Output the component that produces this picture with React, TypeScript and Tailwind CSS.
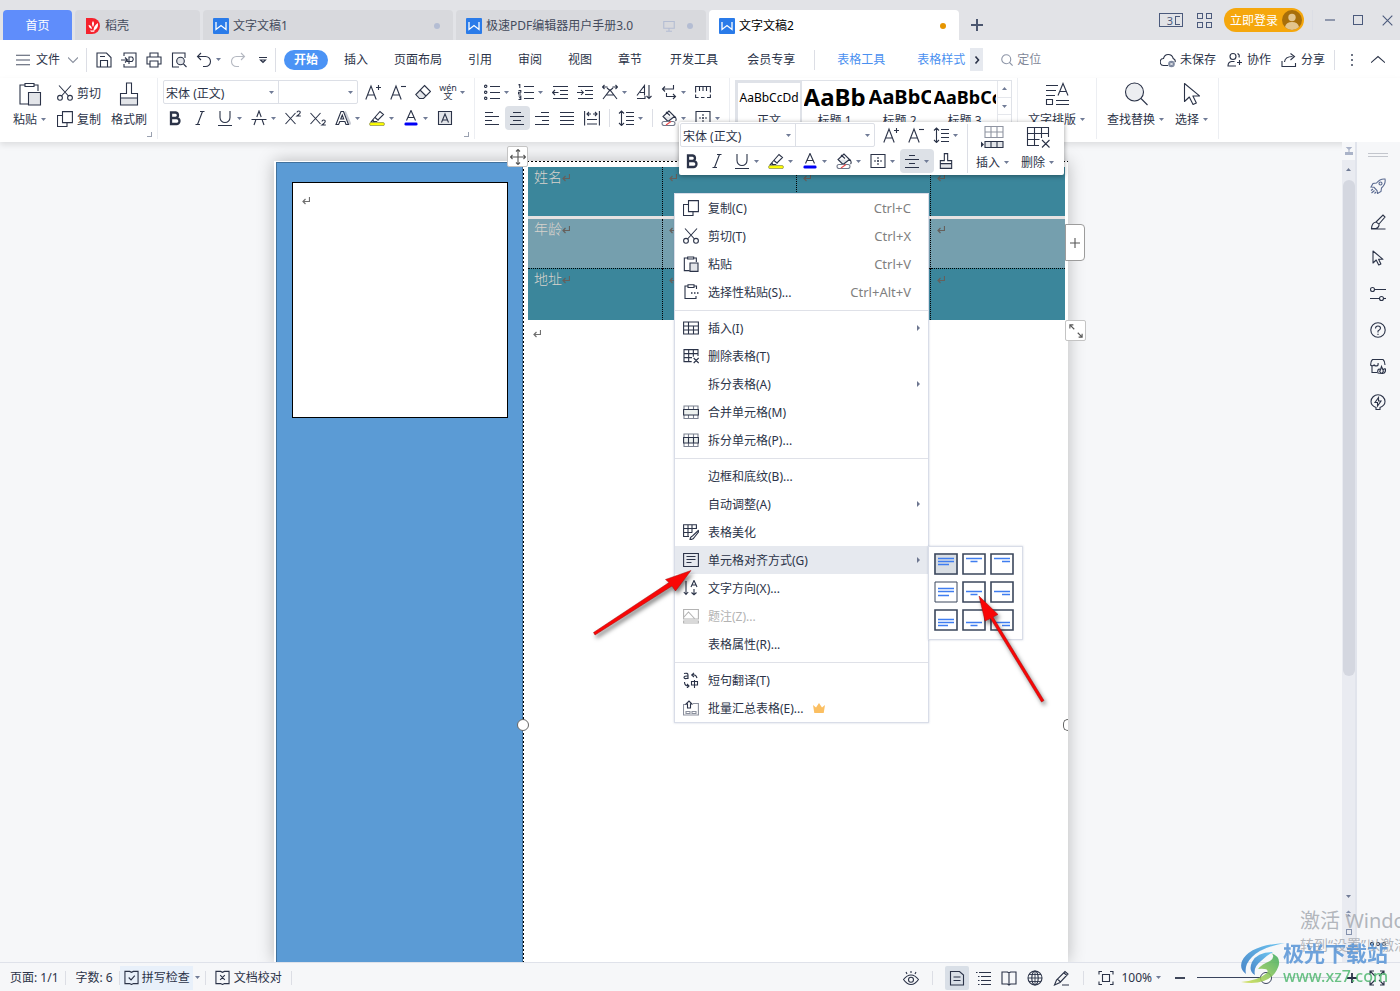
import type { ReactNode } from "react";

const DARK = "#2b3348";

function Icon({ children, className = "size-4", box = 16 }: { children: ReactNode; className?: string; box?: number }) {
  return (
    <svg
      viewBox={`0 0 ${box} ${box}`}
      fill="none"
      stroke="currentColor"
      strokeWidth="1.1"
      className={`shrink-0 [&_*]:[vector-effect:non-scaling-stroke] ${className}`}
      aria-hidden="true"
    >
      {children}
    </svg>
  );
}

function Caret() {
  return (
    <svg viewBox="0 0 5 3" className="h-[3px] w-[5px] shrink-0 fill-[#707b96]" aria-hidden="true">
      <path d="M0 0h5L2.500 3z" />
    </svg>
  );
}

function Rule({ className = "h-5" }: { className?: string }) {
  return <span className={`w-px shrink-0 bg-[#dcdee5] ${className}`} />;
}

// ---- icons -------------------------------------------------------------

const lines = {
  left: "M1 2.5h8M1 6.5h14M1 10.5h7M1 14.5h14",
  center: "M4 2.5h8M1 6.5h14M4 10.5h8M1 14.5h14",
  right: "M7 2.5h8M1 6.5h14M8 10.5h7M1 14.5h14",
  justify: "M1 2.5h14M1 6.5h14M1 10.5h14M1 14.5h14",
};

const AlignIcon = ({ d }: { d: string }) => <Icon><path d={d} /></Icon>;

const MiniCenter = () => <Icon><path d="M5 2.5h6M1 6.5h14M5 10.5h6M1 14.5h14" /></Icon>;

const CutIcon = () => (
  <Icon>
    <path d="M2 .5l9.500 10.500M14 .5L4.500 11" />
    <circle cx="3" cy="12.800" r="2.400" />
    <circle cx="13" cy="12.800" r="2.400" />
  </Icon>
);

const CopyIcon = () => (
  <Icon>
    <path d="M5.500 .6h9.900v11H5.500zM5.500 4.500h-5v11h9.500v-4" />
  </Icon>
);

const PasteIcon = ({ className }: { className?: string }) => (
  <Icon box={24} className={className}>
    <path d="M7 3H2v19h8M16 3h4v6M7 1.500h9v3H7z" />
    <path d="M10.500 10.500h12v12.500h-12z" fill="#e3e5e9" />
  </Icon>
);

const BrushIcon = ({ className }: { className?: string }) => (
  <Icon box={24} className={className}>
    <path d="M3.500 16h17v7h-17z" fill="#e3e5e9" stroke="none" />
    <path d="M9.500 11.500V1h5v10.500h6v11.500h-17V11.500zM3.500 16h17" />
  </Icon>
);

const BigA = ({ sign }: { sign: "+" | "-" }) => (
  <Icon>
    <path d="M.8 15.500L6 2l5.200 13.500M2.700 11h6.600" />
    <path d={sign === "+" ? "M11 3.500h5M13.500 1v5" : "M11 2.500h5"} />
  </Icon>
);

const EraserIcon = () => (
  <Icon>
    <path d="M5.500 6.500l5 5-3 3H4.500L1 10.800z" fill="#e3e5e9" stroke="none" />
    <path d="M9.500 1.500l6 6-7 7H4.500L.8 10.500zM5 6l6 6" />
  </Icon>
);

const PhoneticIcon = () => (
  <span className="flex w-4 flex-col items-center text-[9px] leading-[8px]">
    <span>wén</span>
    <span>文</span>
  </span>
);

const BoldIcon = () => <Icon><path d="M4 2.500h4.700a2.800 2.800 0 010 5.500H4zM4 8h5.500a3 3 0 010 6H4z" strokeWidth="2.300" /></Icon>;
const ItalicIcon = () => <Icon><path d="M8 1.500h4.500M3.500 14.500H8M10.500 1.500l-5 13" /></Icon>;
const UnderlineIcon = () => <Icon><path d="M3 1v6.500a5 5 0 0010 0V1M1 15.500h14" /></Icon>;
const StrikeIcon = () => <Icon><path d="M3 15L4.800 10M13 15l-1.800-5M5.800 7L8 1l2.200 6M.5 9.500h15" /></Icon>;

const SupIcon = ({ sub }: { sub?: boolean }) => (
  <Icon>
    <path d="M.5 3l10 11M10.500 3l-10 11" />
    <path d={sub ? "M12 11.500q0-1.500 1.700-1.500 1.600 0 1.500 1.500 0 1-3.200 3.500h3.800" : "M12 2.500Q12 1 13.700 1q1.600 0 1.500 1.500 0 1-3.200 3.500h3.800"} />
  </Icon>
);

const EffectIcon = () => (
  <Icon>
    <path d="M10 1.500l5.500 13" stroke="#c9ccd4" strokeWidth="2" />
    <path d="M1 14.500L6 1.500h2.500l5 13h-2.500l-1.100-3H4.800l-1.200 3zM5.700 9h3L7.300 5z" />
  </Icon>
);

const HighlightIcon = () => (
  <Icon>
    <path d="M4 9.500l7-8 3.500 3-7 7H4.500zM6 7.500l3.500 3M4 9.500L2 12h4" />
    <rect x=".6" y="12.600" width="14.800" height="3" rx="1.300" fill="#ff0" stroke="#8d8f50" strokeWidth=".8" />
  </Icon>
);

const ColorIcon = () => (
  <Icon>
    <path d="M3.500 10.500L8 .5l4.500 10M5 7.500h6" />
    <rect x="1.500" y="12.500" width="13" height="3" rx="1.300" fill="#0000f5" stroke="none" />
  </Icon>
);

const ShadeTextIcon = () => (
  <Icon>
    <path d="M1.500 1.500h13v13h-13z" fill="#e3e5e9" />
    <path d="M4.500 12.500L8 4l3.500 8.500M5.700 10h4.600" />
  </Icon>
);

const BulletIcon = () => (
  <Icon>
    <path d="M6 2.500h10M6 8.500h10M6 14.500h10" />
    <circle cx="1.700" cy="2.300" r="1.200" />
    <circle cx="1.700" cy="8.300" r="1.200" />
    <circle cx="1.700" cy="14.300" r="1.200" />
  </Icon>
);

const NumberIcon = () => (
  <Icon>
    <path d="M6 2.500h10M6 8.500h10M6 14.500h10M.5 1l1.300-.7V4M.5 6.500h2.300v1.800H.5V10H3M.5 12h2.300v3.500H.5M1 13.700h1.700" />
  </Icon>
);

const IndentIcon = ({ out }: { out?: boolean }) => (
  <Icon>
    <path d="M1 2.500h15M8 6.500h8M8 10.500h8M1 14.500h15" />
    <path d={out ? "M6.500 8.500H.8M3 6L.6 8.500 3 11" : "M0 8.500h6M4 6l2.300 2.500L4 11"} />
  </Icon>
);

const WidthIcon = () => (
  <Icon>
    <path d="M.5 3h5M2.500 1L.5 3l2 2M10.500 3h5M13.500 1l2 2-2 2M1 15L8 6l7 9M5 4l3 2.500L11 4M4.500 11h7" />
  </Icon>
);

const SortIcon = () => (
  <Icon>
    <path d="M1 11.500L8.500 1.500v10M4 8.500h4.500M1 14.500h8V12M13 1v13.500M10.500 12l2.500 2.500 2.500-2.500" />
  </Icon>
);

const WrapIcon = () => (
  <Icon>
    <path d="M12.500 1v4H1.500M4 2.500L1.500 5 4 7.500M5.500 9v3.500h9M12 10l2.500 2.500L12 15" />
  </Icon>
);

const RulerIcon = () => (
  <Icon>
    <path d="M.6 8.500v-6h14.800v6M4.500 3v4M8 3v4M11.500 3v4M.6 10.500v3h3M6 13.500h3.500M12 13.500h3.400v-3" />
  </Icon>
);

const DistributeIcon = () => (
  <Icon>
    <path d="M.6 1v14.500M15.400 1v14.500M3 4h4M5 2L3 4l2 2M9 4h4M11 2l2 2-2 2M3 9.500h10M3 14h10" />
  </Icon>
);

const SpacingIcon = () => (
  <Icon>
    <path d="M8 2.500h8M8 6.500h8M8 10.500h8M8 14.500h8M3.500 1v14.500M1 3.500L3.500 1 6 3.500M1 13l2.500 2.500L6 13" />
  </Icon>
);

const FillIcon = () => (
  <Icon>
    <path d="M2 6.500h12l-5 5H6.500z" fill="#e3e5e9" stroke="none" />
    <path d="M8 1L2 6.500l5 5 6.500-5L8 1zM5 2l4 3.500M14 6.500q2 3 .5 4.500" />
    <rect x="1" y="11.500" width="13" height="4" rx="2" fill="#fff" stroke="#707789" />
    <path d="M5 15l5-3.500" stroke="#ee4b4b" />
  </Icon>
);

const BorderIcon = () => (
  <Icon>
    <path d="M1 1.500h14v13H1z" />
    <path d="M8 4v8.500M4 8h8.500" strokeDasharray="2 1" />
  </Icon>
);

const SearchIcon = () => (
  <Icon box={24} className="size-6">
    <circle cx="10.500" cy="10" r="9" fill="#eceef1" />
    <path d="M17 16.500l6.500 6.500" />
  </Icon>
);

const PointerIcon = ({ className = "size-4" }: { className?: string }) => (
  <Icon className={className}>
    <path d="M3 1v12l3.200-3 2.500 5 2.200-1-2.300-4.700H13z" strokeLinejoin="round" />
  </Icon>
);

const LayoutIcon = () => (
  <Icon box={24} className="size-6">
    <path d="M1 3.500h12M1 8.500h10M1 13.500h9M1.500 17.500h6v5h-6zM11 18.500h13M11 22.500h13M13 13.500l5-12 5 12M14.500 9.500h7" />
  </Icon>
);

const InsertRowIcon = () => (
  <Icon box={24} className="size-6">
    <path d="M4 1.500h18v11H4zM4 7h18M10 1.500v11M16 1.500v11" stroke="#9095a2" />
    <path d="M4 16.500h18v6H4zM10 16.500v6M16 16.500v6" fill="#e3e5e9" />
    <path d="M0 16.500l3 3-3 3z" fill={DARK} stroke="none" />
  </Icon>
);

const DeleteTableIcon = ({ className }: { className?: string }) => (
  <Icon box={24} className={className}>
    <path d="M13 20.500H1.500v-18h21V12M1.500 8.500h21M1.500 14.500h12M8.500 2.500v18M15.500 2.500V13M16 15l7.500 7.500M23.500 15L16 22.500" />
  </Icon>
);

const TableIcon = () => (
  <Icon>
    <path d="M.6 2h14.800v12H.6zM.6 6h14.800M.6 10h14.800M5.500 2v12M10.500 6v8" />
  </Icon>
);

const MergeIcon = ({ split }: { split?: boolean }) => (
  <Icon>
    <path d="M1 2h14v12.500H1zM5.500 2v3M10.500 2v3M5.500 11v3.500M10.500 11v3.500" stroke="#7b8190" />
    <path d="M.6 5.500h14.800v5.500H.6z" fill="#eef2f0" />
    {split && <path d="M5.500 5.500V11M10.500 5.500V11" />}
  </Icon>
);

const PasteSpecialIcon = () => (
  <Icon>
    <path d="M5 2H2v12.500h11V12M11 2h2.500v3M5 .8h6v2.700H5z" />
    <path d="M8 9h1.500M11 9h1.500M14 9h1.500" strokeWidth="1.500" />
  </Icon>
);

const BeautifyIcon = () => (
  <Icon>
    <path d="M6 12.500H.6V.8h12.800V5M.6 4.500h12.800M.6 8.500H9M5 .8v11.700M9 .8v8" />
    <path d="M15.300 6.500L9.500 12q-2 .3-2.500 3.500 3.200.2 4.200-2l4.700-6z" fill="#fff" />
  </Icon>
);

const CellAlignIcon = () => (
  <Icon>
    <path d="M.6 1.500h14.800v13H.6zM3.500 4.500h9M3.500 7.500h9M3.500 10.500h5" />
  </Icon>
);

const DirectionIcon = () => (
  <Icon>
    <path d="M3 1v13M.8 12L3 14.500 5.200 12M8 7l3-6.500L14 7M9 5h4M11 9v5.500M8.500 12.500l2.500 2.200 2.500-2.200" />
  </Icon>
);

const CaptionIcon = () => (
  <Icon>
    <path d="M.6 1.500h14.800v9.500H.6zM1 9l4.500-5 6 6.500M.6 13h14.800v2H.6z" />
  </Icon>
);

const TranslateIcon = () => (
  <Icon>
    <path d="M1 1.500q4-1 4 1.500v4M5 4Q1 3.700 1 5.500 1.500 7.500 5 6M8.500 9.500h6v3.500h-6zM11.500 8v8M9 3q4-1 5 3M11 .8L8.700 3 11 5M1.500 10q0 4 4 4M4 12l2 2-2 2" />
  </Icon>
);

const BatchIcon = () => (
  <Icon>
    <path d="M3.500 4.500h-3v10.500h14.900V3.500H10M3 11.500h4v2H3zM9 11.500h4v2H9z" stroke="#8b909d" />
    <path d="M4.500 8V4H3L6 1l3 3H7.500v4z" fill="#fff" />
  </Icon>
);

const ReturnMark = ({ className = "stroke-[#707070]" }: { className?: string }) => (
  <svg viewBox="0 0 8 8" className={`inline h-2 w-2 shrink-0 ${className}`} fill="none" aria-hidden="true">
    <path d="M7.500 0v4.500H1M3.500 2L1 4.500 3.500 7" strokeWidth="1.200" />
  </svg>
);

const WriterLogo = () => (
  <svg viewBox="0 0 16 16" className="size-4 shrink-0" aria-hidden="true">
    <rect width="16" height="16" rx="1" fill="#2a7be9" />
    <path d="M3 4v7.500l5-4 5 4V4" fill="none" stroke="#fff" strokeWidth="1.300" />
  </svg>
);

const DocerLogo = () => (
  <svg viewBox="0 0 16 16" className="size-4 shrink-0" aria-hidden="true">
    <path d="M1 0h6a8 8 0 010 16H1z" fill="#f5222d" />
    <path d="M8 3q2 2 0 6-2-4 0-6zM3.500 7q3 0 3.500 4-3-.5-3.500-4zM13 5q.5 6-4.500 7.500 0-5 4.500-7.500zM5 12.500h5l-1 1.200H6z" fill="#fff" />
  </svg>
);

// ---- shared controls ---------------------------------------------------

function Tool({ label, icon, menu, active }: { label: string; icon: ReactNode; menu?: boolean; active?: boolean }) {
  return (
    <button
      aria-label={label}
      className={`flex h-6 shrink-0 items-center gap-1 pl-1 ${menu ? "w-[34px]" : "w-[25px]"} ${active ? "rounded-sm bg-[#dde1e7]" : ""}`}
    >
      {icon}
      {menu && <Caret />}
    </button>
  );
}

function BigTool({ label, icon, menu }: { label: string; icon: ReactNode; menu?: boolean }) {
  return (
    <button className="flex shrink-0 flex-col items-center">
      <span className="flex h-[26px] items-center pt-1">{icon}</span>
      <span className="flex h-7 items-center gap-1 whitespace-nowrap">
        {label}
        {menu && <Caret />}
      </span>
    </button>
  );
}

function FontCombo() {
  return (
    <div className="flex h-6 w-[195px] shrink-0 rounded-xs border border-[#dcdfe6] bg-white">
      <div className="flex w-[115px] items-center border-r border-[#dcdfe6] pr-1">
        <select aria-label="字体" className="min-w-0 flex-1 appearance-none bg-transparent pt-0.5 pl-0.5 outline-none">
          <option>宋体 (正文)</option>
        </select>
        <Caret />
      </div>
      <div className="flex min-w-0 flex-1 items-center pr-1">
        <input aria-label="字号" className="min-w-0 flex-1 bg-transparent px-1 outline-none" />
        <Caret />
      </div>
    </div>
  );
}

// ---- top of the window -------------------------------------------------

function DocTab({ title, active, shared }: { title: string; active?: boolean; shared?: boolean }) {
  return (
    <button className={`flex h-[30px] w-[250px] items-center gap-1 rounded-t px-[10px] pt-px ${active ? "bg-white text-black" : "bg-[#d8d9dd] text-[#444b5c]"}`}>
      <WriterLogo />
      <span className="flex-1 text-left whitespace-nowrap">{title}</span>
      {shared && (
        <Icon className="mr-2 size-3 text-[#b4bdd3]">
          <path d="M1 2h14v9H1zM8 11v4M4 15h8" />
        </Icon>
      )}
      <span className={`mr-[3px] size-1.5 rounded-full ${active ? "bg-[#e69500]" : "bg-[#b4bdd3]"}`} />
    </button>
  );
}

function TitleBar() {
  return (
    <div className="flex h-10 items-center bg-[#e2e3e7] pl-[3px]">
      <div className="flex h-10 items-end gap-[3px]">
        <button className="h-[30px] w-[69px] rounded-t bg-[#5f8dfb] text-white">首页</button>
        <button className="flex h-[30px] w-[125px] items-center gap-1 rounded-t bg-[#d8d9dd] px-[10px] pt-px text-[#444b5c]">
          <DocerLogo />
          稻壳
        </button>
        <DocTab title="文字文稿1" />
        <DocTab title="极速PDF编辑器用户手册3.0" shared />
        <DocTab title="文字文稿2" active />
      </div>
      <button aria-label="新建" className="mt-[10px] ml-3 text-[#4b566f]">
        <Icon className="size-3"><path d="M8 0v16M0 8h16" strokeWidth="2" /></Icon>
      </button>
      <div className="flex-1" />
      <div className="flex items-center text-[#4b5a7c]">
        <button aria-label="窗口" className="flex h-[14px] w-6 items-center justify-end gap-0.5 border border-current pr-0.5 text-[11px] leading-[11px]">
          3<span className="h-[9px] w-[5px] border border-r-0 border-current" />
        </button>
        <button aria-label="应用" className="ml-[14px] grid grid-cols-2 gap-[3px]">
          <span className="size-[6px] border border-current" />
          <span className="size-[6px] border border-current" />
          <span className="size-[6px] border border-current" />
          <span className="size-[6px] border border-current" />
        </button>
        <button className="ml-3 flex h-6 w-20 items-center justify-between rounded-full bg-[#f5a70d] pr-0.5 pl-1.5 text-white">
          立即登录
          <svg viewBox="0 0 20 20" className="size-5" aria-hidden="true">
            <circle cx="10" cy="10" r="10" fill="#a86f0a" />
            <circle cx="10" cy="7.500" r="3.700" fill="#e3c58d" />
            <path d="M3 17q1-5 7-5t7 5q-3 3-7 3t-7-3z" fill="#e3c58d" />
          </svg>
        </button>
        <Rule className="mr-3 ml-2 h-5" />
        <button aria-label="最小化"><Icon className="size-[10px]"><path d="M0 8h16" /></Icon></button>
        <button aria-label="最大化" className="ml-[18px] size-[10px] border border-current" />
        <button aria-label="关闭" className="mr-[7px] ml-[19px]"><Icon className="size-[11px]"><path d="M1 1l14 14M15 1L1 15" /></Icon></button>
      </div>
    </div>
  );
}

function MenuBar() {
  return (
    <div className="flex h-[38px] items-center bg-white pt-px pl-4">
      <button className="flex items-center gap-1.5">
        <Icon className="size-[14px] text-[#4b5366]"><path d="M0 2.500h16M0 8h16M0 13.500h16" /></Icon>
        文件
        <Icon className="ml-0.5 size-[10px] text-[#8a909e]"><path d="M0 4l8 8 8-8" /></Icon>
      </button>
      <Rule className="mr-[9px] ml-[8px] h-6" />
      <div className="flex items-center gap-[9px]">
        <button aria-label="保存"><Icon><path d="M1 1h9.500L15 5.500V15H1zM4.500 15V8.500h7V15M4 4.500h5" /></Icon></button>
        <button aria-label="输出为PDF"><Icon><path d="M3 4V1h12v14H3v-3M0 8h6M4 5.500L6.500 8 4 10.500M8 12V5h3q2.500 2 0 4.500H6" /></Icon></button>
        <button aria-label="打印"><Icon><path d="M4 5V1h8v4M4 12H1V5h14v7h-3M4 9h8v6H4z" /></Icon></button>
        <button aria-label="打印预览"><Icon><path d="M8 15H1.500V1h12.500v5" /><circle cx="9.500" cy="9" r="3.800" fill="#e3e5e9" /><path d="M12.500 12l3 3" /></Icon></button>
      </div>
      <button aria-label="撤销" className="ml-[9px] flex items-center gap-1">
        <Icon><path d="M5 1L1.500 4.500 5 8M1.500 4.500h8a5 5 0 010 10H7" /></Icon>
        <Caret />
      </button>
      <button aria-label="恢复" className="ml-[9px] text-[#b4b8c1]"><Icon><path d="M11 1l3.500 3.500L11 8M14.500 4.500h-8a5 5 0 000 10H9" /></Icon></button>
      <button aria-label="更多" className="ml-[13px]"><Icon className="size-2"><path d="M0 3h16M3 8l5 5 5-5z" /></Icon></button>
      <Rule className="mx-[8px] h-6" />
      <button className="h-5 w-11 rounded-full bg-[#4b93f5] font-bold text-white">开始</button>
      <nav className="ml-[3px] flex">
        {["插入", "页面布局", "引用", "审阅", "视图", "章节"].map((t) => (
          <button key={t} className="px-[13px] whitespace-nowrap">{t}</button>
        ))}
      </nav>
      <nav className="ml-px flex gap-px">
        {["开发工具", "会员专享"].map((t) => (
          <button key={t} className="px-[14px] whitespace-nowrap">{t}</button>
        ))}
      </nav>
      <Rule className="mr-[22px] ml-[5px] h-5" />
      <button className="whitespace-nowrap text-[#4a90f0]">表格工具</button>
      <button className="ml-8 whitespace-nowrap text-[#4a90f0]">表格样式</button>
      <button aria-label="更多选项卡" className="ml-[5px] flex h-[23px] w-[13px] items-center justify-center bg-[#e6e9ef]">
        <Icon className="size-2"><path d="M5 1l6 7-6 7" strokeWidth="1.600" /></Icon>
      </button>
      <label className="ml-[18px] flex items-center gap-1 text-[#8d95a7]">
        <Icon className="size-3"><circle cx="7" cy="7" r="6" /><path d="M11 11l4.500 4.500" /></Icon>
        <input aria-label="定位" placeholder="定位" className="w-10 bg-transparent outline-none placeholder:text-[#7f8798]" />
      </label>
      <div className="flex-1" />
      <div className="flex items-center whitespace-nowrap">
        <button className="flex items-center gap-1">
          <Icon>
            <path d="M8 13.500H4a3.500 3.500 0 01-.5-7q1-4 4.700-4 4 0 5 4Q16 8 15 10" />
            <circle cx="11.500" cy="12" r="3.300" fill="#7d889f" stroke="none" />
            <path d="M10.300 10.800l2.400 2.400M12.700 10.800l-2.400 2.400" stroke="#fff" strokeWidth=".9" />
          </Icon>
          未保存
        </button>
        <button className="ml-[11px] flex items-center gap-1">
          <Icon><circle cx="6" cy="4.500" r="3" /><path d="M7.500 9.500H4.500Q1 10 1 14h8M10 10.500h5M12.500 8v5M10.500 1.500q2.500 1 1.500 4" /></Icon>
          协作
        </button>
        <button className="ml-[10px] flex items-center gap-1">
          <Icon><path d="M1 9v5.500h13.500V11M3.500 10q.5-5.500 8-5.500M9.500 1.500l4 3-4 3.500" /></Icon>
          分享
        </button>
        <Rule className="ml-[9px] h-5" />
        <button aria-label="选项" className="ml-4 flex flex-col gap-[3px]">
          <span className="size-0.5 bg-[#6d7484]" />
          <span className="size-0.5 bg-[#6d7484]" />
          <span className="size-0.5 bg-[#6d7484]" />
        </button>
        <button aria-label="折叠功能区" className="mr-[15px] ml-[18px]"><Icon className="size-[14px]"><path d="M0 11l8-7 8 7" /></Icon></button>
      </div>
    </div>
  );
}

function Group({ children, launcher, className = "" }: { children: ReactNode; launcher?: boolean; className?: string }) {
  return (
    <div className={`relative flex h-[61px] shrink-0 border-r border-[#eceef2] pt-px ${className}`}>
      {children}
      {launcher && <span className="absolute right-[5px] bottom-0.5 size-[5px] border-r border-b border-[#9aa1b0]" />}
    </div>
  );
}

const styles = [
  { name: "标题 1", sample: "AaBb", size: "text-[24px]" },
  { name: "标题 2", sample: "AaBbC", size: "text-[20px]" },
  { name: "标题 3", sample: "AaBbCc", size: "text-[18px]" },
];

function Ribbon() {
  return (
    <div className="flex h-16 bg-white shadow-[0_3px_6px_rgba(0,0,0,0.1)]">
      <Group launcher className="pr-[10px] pl-[13px]">
        <BigTool label="粘贴" menu icon={<PasteIcon className="size-6" />} />
        <div className="mr-[10px] ml-[11px] flex flex-col">
          <button className="flex h-7 items-center gap-1 whitespace-nowrap"><CutIcon />剪切</button>
          <button className="flex h-6 items-center gap-1 whitespace-nowrap"><CopyIcon />复制</button>
        </div>
        <BigTool label="格式刷" icon={<BrushIcon className="size-6" />} />
      </Group>

      <Group launcher className="flex-col gap-0.5 pr-1 pl-[5px]">
        <div className="mt-px flex h-6 items-center">
          <FontCombo />
          <span className="w-[3px]" />
          <Tool label="增大字号" icon={<BigA sign="+" />} />
          <Tool label="减小字号" icon={<BigA sign="-" />} />
          <Tool label="清除格式" icon={<EraserIcon />} />
          <Tool label="拼音指南" menu icon={<PhoneticIcon />} />
        </div>
        <div className="flex">
          <Tool label="加粗" icon={<BoldIcon />} />
          <Tool label="倾斜" icon={<ItalicIcon />} />
          <Tool label="下划线" menu icon={<UnderlineIcon />} />
          <Tool label="删除线" menu icon={<StrikeIcon />} />
          <Tool label="上标" icon={<SupIcon />} />
          <Tool label="下标" icon={<SupIcon sub />} />
          <Tool label="文字效果" menu icon={<EffectIcon />} />
          <Tool label="突出显示" menu icon={<HighlightIcon />} />
          <Tool label="字体颜色" menu icon={<ColorIcon />} />
          <Tool label="字符底纹" icon={<ShadeTextIcon />} />
        </div>
      </Group>

      <Group className="flex-col gap-0.5 pr-1 pl-[5px]">
        <div className="mt-px flex h-6">
          <Tool label="项目符号" menu icon={<BulletIcon />} />
          <Tool label="编号" menu icon={<NumberIcon />} />
          <Tool label="减少缩进量" icon={<IndentIcon out />} />
          <Tool label="增加缩进量" icon={<IndentIcon />} />
          <Tool label="中文版式" menu icon={<WidthIcon />} />
          <Tool label="排序" icon={<SortIcon />} />
          <Tool label="换行" menu icon={<WrapIcon />} />
          <Tool label="制表位" icon={<RulerIcon />} />
        </div>
        <div className="flex items-center">
          <Tool label="左对齐" icon={<AlignIcon d={lines.left} />} />
          <Tool label="居中对齐" active icon={<AlignIcon d={lines.center} />} />
          <Tool label="右对齐" icon={<AlignIcon d={lines.right} />} />
          <Tool label="两端对齐" icon={<AlignIcon d={lines.justify} />} />
          <Tool label="分散对齐" icon={<DistributeIcon />} />
          <Rule className="mx-1 h-[18px]" />
          <Tool label="行距" menu icon={<SpacingIcon />} />
          <Rule className="mx-1 h-[18px]" />
          <Tool label="底纹颜色" menu icon={<FillIcon />} />
          <Tool label="边框" menu icon={<BorderIcon />} />
        </div>
      </Group>

      <Group className="pr-[5px] pl-[5px]">
        <div className="mt-px flex h-[52px] w-[277px] border border-[#dfe2e8]">
          <button className="flex w-[66px] flex-col items-center border-2 border-[#dfe2e8] whitespace-nowrap">
            <span className="h-[29px] leading-[30px] text-black">AaBbCcDd</span>
            <span>正文</span>
          </button>
          {styles.map((s) => (
            <button key={s.name} className="flex w-[65px] flex-col items-center whitespace-nowrap">
              <span className={`h-[31px] w-[62px] overflow-hidden text-left leading-[32px] font-bold text-black ${s.size}`}>{s.sample}</span>
              <span>{s.name}</span>
            </button>
          ))}
          <div className="flex flex-1 flex-col border-l border-[#e5e7ec]">
            <button aria-label="上一行" className="flex h-4 rotate-180 items-center justify-center"><Caret /></button>
            <button aria-label="下一行" className="flex h-[18px] items-center justify-center border-y border-[#e5e7ec]"><Caret /></button>
            <button aria-label="展开" className="flex h-4 items-center justify-center"><Caret /></button>
          </div>
        </div>
      </Group>

      <Group className="pr-[11px] pl-[10px]">
        <BigTool label="文字排版" menu icon={<LayoutIcon />} />
      </Group>
      <Group className="gap-[11px] pr-[10px] pl-[10px]">
        <BigTool label="查找替换" menu icon={<SearchIcon />} />
        <BigTool label="选择" menu icon={<PointerIcon className="size-6" />} />
      </Group>
    </div>
  );
}

// ---- floating panels ---------------------------------------------------

function MiniToolbar() {
  return (
    <div className="absolute -top-[39px] left-[405px] z-20 flex rounded-xs bg-white shadow-[0_1px_5px_rgba(0,0,0,0.4)]">
      <div className="flex flex-col gap-0.5 pt-px pr-0 pb-0.5 pl-px">
        <div className="flex items-center">
          <FontCombo />
          <span className="w-1" />
          <Tool label="增大字号" icon={<BigA sign="+" />} />
          <Tool label="减小字号" icon={<BigA sign="-" />} />
          <Tool label="行距" menu icon={<SpacingIcon />} />
        </div>
        <div className="flex">
          <Tool label="加粗" icon={<BoldIcon />} />
          <Tool label="倾斜" icon={<ItalicIcon />} />
          <Tool label="下划线" menu icon={<UnderlineIcon />} />
          <Tool label="突出显示" menu icon={<HighlightIcon />} />
          <Tool label="字体颜色" menu icon={<ColorIcon />} />
          <Tool label="底纹颜色" menu icon={<FillIcon />} />
          <Tool label="边框" menu icon={<BorderIcon />} />
          <Tool label="对齐方式" menu active icon={<MiniCenter />} />
          <Tool label="格式刷" icon={<BrushIcon className="size-4" />} />
        </div>
      </div>
      <Rule className="my-0.5 ml-1" />
      <div className="-mb-px flex gap-3 pr-[10px] pl-2">
        <BigTool label="插入" menu icon={<InsertRowIcon />} />
        <BigTool label="删除" menu icon={<DeleteTableIcon className="size-6" />} />
      </div>
    </div>
  );
}

type Item = { label: string; icon?: ReactNode; keys?: string; more?: boolean; active?: boolean; disabled?: boolean; crown?: boolean };

const menu: Item[][] = [
  [
    { label: "复制(C)", icon: <CopyIcon />, keys: "Ctrl+C" },
    { label: "剪切(T)", icon: <CutIcon />, keys: "Ctrl+X" },
    { label: "粘贴", icon: <PasteIcon className="size-4" />, keys: "Ctrl+V" },
    { label: "选择性粘贴(S)...", icon: <PasteSpecialIcon />, keys: "Ctrl+Alt+V" },
  ],
  [
    { label: "插入(I)", icon: <TableIcon />, more: true },
    { label: "删除表格(T)", icon: <DeleteTableIcon className="size-4" /> },
    { label: "拆分表格(A)", more: true },
    { label: "合并单元格(M)", icon: <MergeIcon /> },
    { label: "拆分单元格(P)...", icon: <MergeIcon split /> },
  ],
  [
    { label: "边框和底纹(B)..." },
    { label: "自动调整(A)", more: true },
    { label: "表格美化", icon: <BeautifyIcon /> },
    { label: "单元格对齐方式(G)", icon: <CellAlignIcon />, more: true, active: true },
    { label: "文字方向(X)...", icon: <DirectionIcon /> },
    { label: "题注(Z)...", icon: <CaptionIcon />, disabled: true },
    { label: "表格属性(R)..." },
  ],
  [
    { label: "短句翻译(T)", icon: <TranslateIcon /> },
    { label: "批量汇总表格(E)...", icon: <BatchIcon />, crown: true },
  ],
];

function ContextMenu() {
  return (
    <div role="menu" className="absolute top-8 left-[400px] z-10 w-[255px] border border-[#d9dde8] bg-white shadow-[0_0_2px_rgba(90,110,150,0.3)]">
      {menu.map((items, i) => (
        <div key={i} className={i > 0 ? "mt-1 border-t border-[#dfe1e8] pt-[3px]" : ""}>
          {items.map((it) => (
            <button
              key={it.label}
              role="menuitem"
              disabled={it.disabled}
              className={`flex h-7 w-full items-center pr-2 pl-2 text-left whitespace-nowrap ${it.active ? "bg-[#e6e9ef]" : ""} ${it.disabled ? "text-[#b3b3b3]" : ""}`}
            >
              <span className="mr-[9px] flex size-4">{it.icon}</span>
              <span className="pt-px">{it.label}</span>
              {it.crown && (
                <svg viewBox="0 0 12 10" className="ml-[9px] h-[10px] w-3 fill-[#fbbf62]" aria-hidden="true">
                  <path d="M0 2l3 2.500L6 0l3 4.500L12 2l-1.300 8H1.300z" />
                </svg>
              )}
              <span className="flex-1" />
              {it.keys && <span className="mr-[9px] pt-px text-[13px] text-[#808080]">{it.keys}</span>}
              {it.more && <svg viewBox="0 0 3 6" className="h-1.5 w-[3px] fill-[#6d7690]" aria-hidden="true"><path d="M0 0l3 3-3 3z" /></svg>}
            </button>
          ))}
        </div>
      ))}
    </div>
  );
}

const cells = [
  { name: "靠上两端对齐", d: "M4 5.500h16M4 8.500h16M4 11.500h11" },
  { name: "靠上居中对齐", d: "M4 5.500h16M8.500 8.500h7" },
  { name: "靠上右对齐", d: "M4 5.500h16M12 8.500h8" },
  { name: "中部两端对齐", d: "M4 7.500h16M4 10.500h16M4 14.500h11" },
  { name: "水平居中", d: "M4 10.500h16M8.500 13.500h7" },
  { name: "中部右对齐", d: "M4 10.500h16M12 13.500h8" },
  { name: "靠下两端对齐", d: "M4 10.500h16M4 13.500h16M4 16.500h10" },
  { name: "靠下居中对齐", d: "M4 13.500h16M8.500 16.500h7" },
  { name: "靠下右对齐", d: "M4 13.500h16M12 16.500h8" },
];

function AlignPanel() {
  return (
    <div className="absolute top-[385px] left-[654px] z-10 grid grid-cols-3 gap-x-1 gap-y-1.5 border border-[#d9dde8] bg-white pt-1.5 pr-2 pb-2 pl-[5px] shadow-[0_0_2px_rgba(90,110,150,0.3)]">
      {cells.map((c, i) => (
        <button key={c.name} aria-label={c.name} className={i === 0 ? "bg-[#d9dee4]" : ""}>
          <svg viewBox="0 0 24 22" className="h-[22px] w-6" fill="none" aria-hidden="true">
            <path d="M1 1h22v20H1z" stroke="#3b475c" strokeWidth={i === 3 ? 1 : 1.6} />
            <path d={c.d} stroke="#3f7df0" strokeWidth="1.300" />
          </svg>
        </button>
      ))}
    </div>
  );
}

function Pointers() {
  return (
    <svg viewBox="0 0 480 160" className="pointer-events-none absolute top-[399px] left-[310px] z-20 h-[160px] w-[480px] drop-shadow-[2px_3px_2px_rgba(0,0,0,0.5)]" aria-hidden="true">
      <g fill="#f90606" stroke="#a01010" strokeWidth=".5">
        <path d="M9.500 72.500L85 22.500 81.500 19.500 107 10.500 91.500 31 88 26 11 75z" />
        <path d="M457.500 142L406.500 58.500 401 61 395 36 414 54.500 409 57 460 140.500z" />
      </g>
    </svg>
  );
}

// ---- document ----------------------------------------------------------

const rows = [
  { label: "姓名", className: "h-[50px] bg-[#3b869b]" },
  { label: "年龄", className: "h-[51px] border-t-[3px] border-[#e6e2e2] bg-[#759fae]" },
  { label: "地址", className: "h-[52px] border-t border-dotted border-t-black bg-[#3b869b]" },
];

function Page() {
  return (
    <div className="relative mt-[19px] flex w-[794px] shrink-0 bg-white pl-0.5 shadow-[0_0_16px_rgba(0,0,0,0.25)]">
      <div className="mt-px w-[247px] border border-b-0 border-[#41719c] bg-[#5b9bd5] pt-[19px] pr-[14px] pl-[15px]">
        <div className="h-[236px] border border-black bg-white px-[9px] py-2">
          <ReturnMark />
        </div>
      </div>
      <div className="min-w-0 flex-1 bg-[repeating-linear-gradient(to_right,#000_0_2px,transparent_2px_4px),repeating-linear-gradient(to_bottom,#000_0_2px,transparent_2px_4px)] bg-[length:100%_1px,1px_100%] bg-no-repeat pt-1.5 pr-[3px] pl-[5px]">
        <table className="w-full table-fixed border-collapse text-[14px] leading-[18px] text-[#d8d2cc]">
          <tbody>
            {rows.map((r) => (
              <tr key={r.label} className={r.className}>
                {[r.label, "", "", ""].map((text, i) => (
                  <td key={i} className={`pt-px pl-1.5 align-top font-light ${i < 3 ? "border-r border-dotted border-r-black" : ""}`}>
                    {text}
                    <ReturnMark className="stroke-[#66605c]" />
                  </td>
                ))}
              </tr>
            ))}
          </tbody>
        </table>
        <div className="pt-1 pl-[5px]"><ReturnMark /></div>
      </div>

      <button aria-label="移动表格" className="absolute -top-[15px] left-[233px] flex size-[21px] items-center justify-center rounded-xs border border-[#c4c4c4] bg-white text-[#555]">
        <Icon><path d="M8 .5v15M.5 8h15M6 2.500l2-2 2 2M6 13.500l2 2 2-2M2.500 6l-2 2 2 2M13.500 6l2 2-2 2" /></Icon>
      </button>
      <button aria-label="添加列" className="absolute top-[63px] left-[791px] flex h-[37px] w-5 items-center justify-center rounded-r border border-[#9c9c9c] bg-white text-[#555]">
        <Icon className="size-[10px]"><path d="M8 0v16M0 8h16" /></Icon>
      </button>
      <button aria-label="缩放表格" className="absolute top-[159px] left-[791px] flex size-[21px] items-center justify-center rounded-xs border border-[#c4c4c4] bg-white text-[#555]">
        <Icon className="size-[14px]"><path d="M1 5V1h4M1 1l5 5M15 11v4h-4M15 15l-5-5" /></Icon>
      </button>
      <span className="absolute top-[558px] left-[243px] size-3 rounded-full border border-[#666] bg-white" />
      <span className="absolute top-[558px] left-[789px] h-3 w-[5px] rounded-l-full border border-r-0 border-[#666] bg-white" />

      <MiniToolbar />
      <ContextMenu />
      <AlignPanel />
      <Pointers />
    </div>
  );
}

function ScrollBar() {
  return (
    <div className="flex w-[13px] shrink-0 flex-col items-center bg-[#e9ebf1] text-[#8491ad]">
      <span className="flex h-[18px] w-full items-center justify-center bg-[#f6f7f9] text-[#aab3c8]">
        <Icon className="size-2"><path d="M3 0h10l-5 5zM0 11h16v4H0zM8 5v6" fill="currentColor" /></Icon>
      </span>
      <span className="flex h-5 rotate-180 items-center"><Caret /></span>
      <span className="h-[496px] w-3 rounded-full bg-[#d4d7e0]" />
      <span className="flex-1" />
      <Caret />
      <span className="mt-3 mb-3 flex"><Icon className="size-[7px]"><path d="M2 7l6-6 6 6zM2 15l6-6 6 6z" fill="currentColor" stroke="none" /></Icon></span>
      <span className="size-[6px] border border-current" />
      <span className="mt-3 mb-2 flex"><Icon className="size-[7px]"><path d="M2 1l6 6 6-6zM2 9l6 6 6-6z" fill="currentColor" stroke="none" /></Icon></span>
    </div>
  );
}

const sideTools = [
  { name: "稻壳资源", icon: <Icon><path d="M15 1q-5-.5-8.500 4L3 5.500 1 9l3 .3L7 12.500l.5 3 3.500-2 .5-3.500Q16 6 15 1zM1 12.500l2-1.500M1.500 15l3-2.500M4.500 15.500L6 14" stroke="#5a6a91" /><circle cx="10.500" cy="5.500" r="1.500" stroke="#5a6a91" /></Icon> },
  { name: "样式", icon: <Icon><path d="M6 8l7-7 2 2-6 7M6 8q-4 .5-4.500 6.500H6Q9.500 13 9 10zM1 15h14.500" /></Icon> },
  { name: "选择窗格", icon: <PointerIcon /> },
  { name: "属性", icon: <Icon><circle cx="2.500" cy="3.500" r="2" /><path d="M4.500 3.500H16M0 12.500h9.500" /><circle cx="11.500" cy="12.500" r="2" /><path d="M13.500 12.500H16" /></Icon> },
  { name: "帮助", icon: <Icon><circle cx="8" cy="8" r="7.200" /><path d="M5.500 6.500Q5.500 4 8 4t2.500 2.300Q10.500 7.500 8 9v1.500M8 11.700v1.300" /></Icon> },
  { name: "稻壳商城", icon: <Icon><path d="M2 8v6.500h5M2.500 1.500h10.500q2 1.500 2 5.500M2.500 1.500Q.6 3 .6 7q1.500 1.500 3.500 0 2 2 4 0V5M8 15q-1-3 1-4 1 0 1.500 1l1-3.500 1.500 3.500q1-1.500 2.500-1 .5 4-3 4.500z" /><path d="M9 12.500l2 2.500M14 12.500L12 15" /></Icon> },
  { name: "技巧", icon: <Icon><path d="M6 13.500Q1 11.500 1 7.500A7 7 0 018 .8a7 7 0 017 6.700q0 4-5 6v2H6zM8.500 3.500L5 8.500h2.500v3.500L11 7H8.500z" /></Icon> },
];

function SidePanel() {
  return (
    <div className="flex w-[45px] shrink-0 flex-col items-center border-l-2 border-[#e1e4ec] bg-[#f6f7f9] pr-px">
      <span className="mt-[11px] mb-[21px] h-[4px] w-5 border-y border-[#c3c6cd]" />
      <div className="flex flex-col gap-5">
        {sideTools.map((t) => (
          <button key={t.name} aria-label={t.name}>{t.icon}</button>
        ))}
      </div>
      <div className="flex-1" />
      <button aria-label="更多" className="mb-2.5"><Icon><circle cx="2" cy="8" r="1.500" /><circle cx="8" cy="8" r="1.500" /><circle cx="14" cy="8" r="1.500" /></Icon></button>
    </div>
  );
}

// ---- status bar --------------------------------------------------------

function StatusBar() {
  return (
    <div className="relative z-10 flex h-[29px] items-center border-t border-[#dfe2ea] bg-[#f6f7f9] pt-px whitespace-nowrap">
      <span className="ml-[10px]">页面: 1/1</span>
      <Rule className="mr-[10px] ml-[6px] h-[14px]" />
      <span>字数: 6</span>
      <Rule className="ml-[6px] h-[14px]" />
      <button className="flex h-6 items-center gap-[3px] bg-[#e8f0fa] pr-[3px] pl-1">
        <Icon className="size-[15px]"><path d="M6 1.500H1v13h5l2 1 2-1h5v-13h-5l-2 1zM5 8l2.500 2.500L11.500 6" /></Icon>
        拼写检查
      </button>
      <span className="mr-[5px] ml-0.5 flex"><Caret /></span>
      <Rule className="h-[14px]" />
      <button className="ml-[9px] flex items-center gap-1">
        <Icon className="size-[15px]"><path d="M6 1.500H1v13h5l2 1 2-1h5v-13h-5l-2 1zM5.500 5.500l5 5M10.500 5.500l-5 5" /></Icon>
        文档校对
      </button>
      <Rule className="ml-[9px] h-[14px]" />
      <div className="flex-1" />
      <button aria-label="护眼模式"><Icon><path d="M.5 9.500Q4 5 8 5t7.500 4.500Q12 14.500 8 14.500T.5 9.500zM8 1v2M3 2l1 2M13 2l-1 2" /><circle cx="8" cy="9.700" r="2.500" /></Icon></button>
      <Rule className="mr-3 ml-[13px] h-[14px]" />
      <button aria-label="页面视图" className="flex size-6 items-center justify-center rounded-xs bg-[#d9dfe7]"><Icon><path d="M1.500 1.500h9l4 3.500v10h-13zM4.500 7h7M4.500 10.500h7" /></Icon></button>
      <div className="ml-[6px] flex gap-[10px]">
        <button aria-label="大纲"><Icon><path d="M1 2.500h1.500M4 2.500h12M3 6.500h1.500M6 6.500h10M3 10.500h1.500M6 10.500h10M3 14.500h1.500M6 14.500h10" /></Icon></button>
        <button aria-label="阅读版式"><Icon><path d="M1 2h5.500L8 3l1.500-1H15v12H9.500L8 15l-1.500-1H1zM8 3v12" /></Icon></button>
        <button aria-label="Web版式"><Icon><circle cx="8" cy="8" r="7" /><ellipse cx="8" cy="8" rx="3.200" ry="7" /><path d="M1 8h14M2 4.500h12M2 11.500h12M8 1v14" strokeWidth=".9" /></Icon></button>
        <button aria-label="写作模式"><Icon><path d="M1.500 15l2-5L12 1.500l3 2.500-8 8.500zM11 3l3 2.500M4.500 9l3 3M9 15h7" /></Icon></button>
      </div>
      <Rule className="mr-[14px] ml-[14px] h-[14px]" />
      <button aria-label="适合页面"><Icon><path d="M1 4.500V1.500h3M12 1.500h3v3M15 11.500v3h-3M4 14.500H1v-3M4.500 4.500h7v7h-7z" /></Icon></button>
      <button className="ml-[7px] flex items-center gap-1">100%<Caret /></button>
      <button aria-label="缩小" className="ml-[14px]"><Icon className="size-[10px]"><path d="M0 8h16" strokeWidth="1.800" /></Icon></button>
      <input
        type="range"
        aria-label="显示比例"
        defaultValue={48}
        className="ml-3 h-4 w-[143px] appearance-none bg-[linear-gradient(to_right,#39435c_50%,#ccd0d9_50%)] bg-[length:100%_1px] bg-center bg-no-repeat [&::-webkit-slider-thumb]:size-3 [&::-webkit-slider-thumb]:appearance-none [&::-webkit-slider-thumb]:rounded-full [&::-webkit-slider-thumb]:border [&::-webkit-slider-thumb]:border-[#39435c] [&::-webkit-slider-thumb]:bg-white"
      />
      <button aria-label="放大" className="ml-[7px]"><Icon className="size-[10px]"><path d="M8 0v16M0 8h16" strokeWidth="1.800" /></Icon></button>
      <button aria-label="全屏" className="mr-[15px] ml-3"><Icon><path d="M1 5V1h4M11 1h4v4M15 11v4h-4M5 15H1v-4M1 1l5 5M15 1l-5 5M15 15l-5-5M1 15l5-5" /></Icon></button>
    </div>
  );
}

function Watermark() {
  return (
    <div className="pointer-events-none absolute right-0 bottom-0 z-20 h-[85px] w-[160px] overflow-hidden whitespace-nowrap">
      <div className="pl-[60px] text-[#a9adb4]/90">
        <p className="text-[20px] leading-[30px]">激活 Windows</p>
        <p className="text-[14px] leading-[18px]">转到“设置”以激活 Windows。</p>
      </div>
      <div className="absolute bottom-1 left-0 flex items-center opacity-85">
        <svg viewBox="0 0 46 42" className="h-[42px] w-[46px]" aria-hidden="true">
          <defs>
            <linearGradient id="sky" x1="1" y1="0" x2="0" y2="1">
              <stop offset="0" stopColor="#57bdf0" />
              <stop offset="1" stopColor="#2c73c0" />
            </linearGradient>
            <linearGradient id="leaf" x1="1" y1="0" x2="0" y2="1">
              <stop offset="0" stopColor="#35a85c" />
              <stop offset="1" stopColor="#d5e04e" />
            </linearGradient>
          </defs>
          <path d="M45 0Q10 2 2 18-1 26 6 31 4 22 12 14 22 4 45 0z" fill="url(#sky)" />
          <path d="M33 9Q17 9 12 19q-4 9 3 13-2-8 6-14 5-5 12-9z" fill="url(#sky)" />
          <path d="M31 10q5 3-1 8-8 3-12 8 12-1 9 4Q17 38 1 39q24 4 34-9 10-15-4-20z" fill="url(#leaf)" />
        </svg>
        <div className="-ml-[3px]">
          <p className="text-[21px] leading-6 font-bold text-[#5794d6]">极光下载站</p>
          <p className="text-[16px] leading-[22px] font-medium text-[#52b871]">www.xz7.com</p>
        </div>
      </div>
    </div>
  );
}

export default function App() {
  return (
    <div className="relative flex h-screen flex-col overflow-hidden bg-[#f6f7f9] font-['Noto_Sans','Noto_Sans_CJK_SC',sans-serif] text-[12px] leading-[17px] text-[#2b3348]">
      <TitleBar />
      <MenuBar />
      <Ribbon />
      <div className="flex min-h-0 flex-1">
        <main className="flex min-w-0 flex-1 justify-center">
          <Page />
        </main>
        <ScrollBar />
        <SidePanel />
      </div>
      <StatusBar />
      <Watermark />
    </div>
  );
}
